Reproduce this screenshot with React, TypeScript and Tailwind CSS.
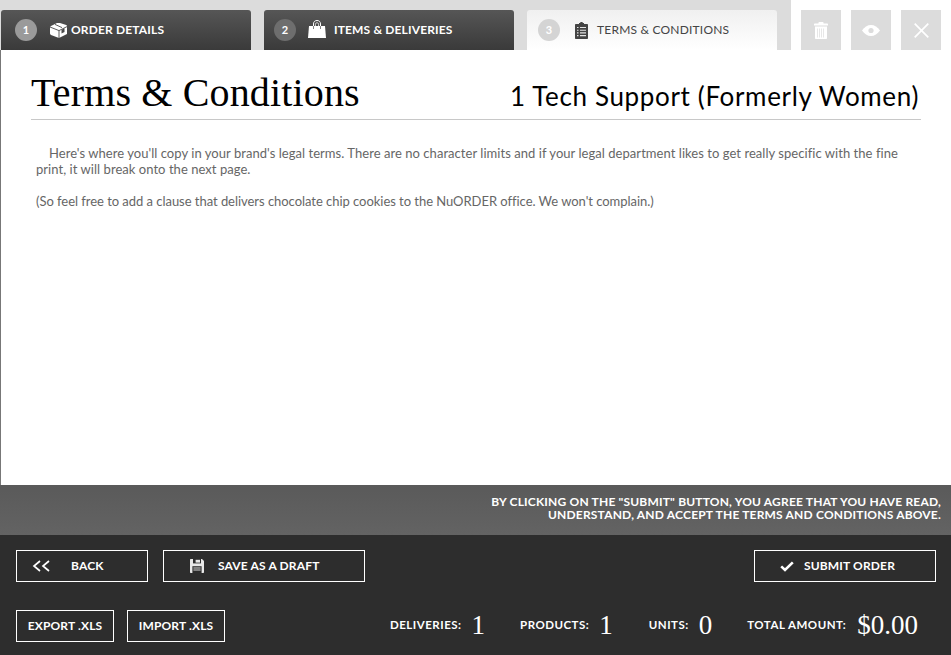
import type { ReactNode } from "react";

function BoxIcon() {
  return (
    <svg width="17" height="15" viewBox="0 0 17 15">
      <path d="M1 3 7 0H10L16.2 2C16.8 2.2 17 2.6 17 3V11L9 15 1 12C.3 11.7 0 11.3 0 10.6V4Z" fill="#fff" />
      <path d="M0 4 9 7.6V15M9 7.6 17 3.6M5 1.4 12 4.6" fill="none" stroke="#4a4a4a" strokeWidth=".9" />
      <path d="M11.5 6.8 14.5 5.3V9L11.5 10.5Z" fill="#4a4a4a" />
    </svg>
  );
}

function BagIcon() {
  return (
    <svg width="18" height="18" viewBox="0 0 18 18" fill="none">
      <path d="M1 6H17L18 18H0Z" fill="#fff" />
      <path d="M5.5 6V4C5.5 1.6 7 .5 9 .5S12.5 1.6 12.5 4V6" stroke="#fff" strokeWidth="1" />
      <path d="M7.4 6V4.4C7.4 3.4 8 2.8 9 2.8S10.6 3.4 10.6 4.4V6" stroke="#fff" strokeWidth=".8" />
      <path d="M5.5 6V9M12.5 6V9" stroke="#666" strokeWidth=".8" />
    </svg>
  );
}

function ClipboardIcon() {
  return (
    <svg width="13" height="17" viewBox="0 0 13 17">
      <path d="M1 2H4V1H5.2A1.3 1.3 0 0 1 7.8 1H9V2H12C12.6 2 13 2.4 13 3V16C13 16.6 12.6 17 12 17H1C.4 17 0 16.6 0 16V3C0 2.4.4 2 1 2Z" fill="#444" />
      <path d="M2 5.5H3.5M5 5.5H11M2 8.2H3.5M5 8.2H11M2 10.9H3.5M5 10.9H11M2 13.6H3.5M5 13.6H11" stroke="#e4e4e4" strokeWidth="1.1" />
    </svg>
  );
}

function TrashIcon() {
  return (
    <svg width="14" height="17" viewBox="0 0 14 17" fill="#fff">
      <path d="M4.5 1.6V.6C4.5.3 4.8 0 5.1 0H8.9C9.2 0 9.5.3 9.5.6V1.6H13C13.6 1.6 14 2 14 2.6V3.6H0V2.6C0 2 .4 1.6 1 1.6Z" />
      <path d="M1 4.6H13V16C13 16.6 12.6 17 12 17H2C1.4 17 1 16.6 1 16Z" />
      <path d="M3.5 6.5V15.5M5.5 6.5V15.5M7.5 6.5V15.5M9.5 6.5V15.5" stroke="#dcdcdc" strokeWidth=".7" />
    </svg>
  );
}

function EyeIcon() {
  return (
    <svg width="18" height="11" viewBox="0 0 18 11">
      <path d="M0 5.5C2.4 2 5.5 0 9 0S15.6 2 18 5.5C15.6 9 12.5 11 9 11S2.4 9 0 5.5Z" fill="#fff" />
      <circle cx="9" cy="5.5" r="2.6" fill="#dcdcdc" />
    </svg>
  );
}

function CloseIcon() {
  return (
    <svg width="15" height="15" viewBox="0 0 15 15" fill="none">
      <path d="M.7.7 14.3 14.3M14.3.7.7 14.3" stroke="#fff" strokeWidth="1.7" />
    </svg>
  );
}

function BackIcon() {
  return (
    <svg width="18" height="12" viewBox="0 0 18 12" fill="none">
      <path d="M8 1 2 6 8 11M17 1 11 6 17 11" stroke="#fff" strokeWidth="1.7" />
    </svg>
  );
}

function SaveIcon() {
  return (
    <svg width="14" height="14" viewBox="0 0 14 14">
      <path d="M0 1C0 .4.4 0 1 0H12L14 2V13C14 13.6 13.6 14 13 14H1C.4 14 0 13.6 0 13Z" fill="#e8e8e8" />
      <path d="M3 0H11V4.4H3Z" fill="#2d2d2d" />
      <path d="M5.6 .8H10V3.6H5.6Z" fill="#e8e8e8" />
      <path d="M2.4 7.2H11.6V14H2.4Z" fill="#2d2d2d" />
      <path d="M3.4 9H10.6M3.4 11H10.6" stroke="#e8e8e8" strokeWidth=".9" />
    </svg>
  );
}

function CheckIcon() {
  return (
    <svg width="14" height="11" viewBox="0 0 14 11" fill="none">
      <path d="M1.2 5.4 5 9 12.8 1.4" stroke="#fff" strokeWidth="2.6" />
    </svg>
  );
}

function DarkTab({ n, label, icon, className, iconBox, circle }: { n: number; label: string; icon: ReactNode; className: string; iconBox: string; circle: string }) {
  return (
    <div className={`flex h-10 w-[250px] items-center rounded-t-[3px] bg-gradient-to-b from-[#565656] to-[#3a3a3a] ${className}`}>
      <span className={`flex h-[22px] w-[22px] items-center justify-center rounded-full text-[11px] font-bold text-white ${circle}`}>{n}</span>
      <span className={`flex items-center ${iconBox}`}>{icon}</span>
      <span className="text-[12px] font-bold tracking-[0.15px] text-white">{label}</span>
    </div>
  );
}

function ToolButton({ children }: { children: ReactNode }) {
  return <div className="flex h-10 w-10 items-center justify-center bg-[#dcdcdc]">{children}</div>;
}

function OutlineButton({ className, children }: { className: string; children: ReactNode }) {
  return (
    <button className={`flex h-8 items-center border border-white text-[12px] font-bold tracking-[0.15px] text-white ${className}`}>
      {children}
    </button>
  );
}

function Stat({ label, value, className, valueClass }: { label: string; value: string; className: string; valueClass: string }) {
  return (
    <div className={`mb-[2px] flex items-center ${className}`}>
      <span className="text-[11.5px] font-bold tracking-[0.5px] text-white">{label}</span>
      <span className={`font-['Liberation_Serif',serif] text-[27px] leading-none text-white ${valueClass}`}>{value}</span>
    </div>
  );
}

export default function App() {
  return (
    <div className="flex h-[655px] w-[951px] flex-col overflow-hidden bg-white font-['Lato',sans-serif]">
      <div className="flex h-[50px] shrink-0">
        <div className="flex w-[791px] items-end gap-[13px] bg-[#dcdcdc] pl-px">
          <DarkTab n={1} label="ORDER DETAILS" className="pl-[14px]" circle="bg-[#9a9a9a]" iconBox="ml-[13px] mr-[4px]" icon={<BoxIcon />} />
          <DarkTab n={2} label="ITEMS & DELIVERIES" className="pl-[10px]" circle="bg-[#6e6e6e]" iconBox="mb-[2px] ml-[12px] mr-[8px]" icon={<BagIcon />} />
          <div className="flex h-10 w-[250px] items-center rounded-t-[3px] bg-gradient-to-b from-[#f0f0f0] to-white pl-[11px]">
            <span className="flex h-[22px] w-[22px] items-center justify-center rounded-full bg-[#d4d4d4] text-[11px] font-bold text-white">3</span>
            <span className="ml-[15px] mr-[9px] flex items-center"><ClipboardIcon /></span>
            <span className="text-[12px] tracking-[0.2px] text-[#444]">TERMS &amp; CONDITIONS</span>
          </div>
        </div>
        <div className="flex flex-1 items-end gap-[10px] pl-[10px]">
          <ToolButton><TrashIcon /></ToolButton>
          <ToolButton><EyeIcon /></ToolButton>
          <ToolButton><CloseIcon /></ToolButton>
        </div>
      </div>

      <div className="flex-1 border-l border-[#777] pl-[30px] pr-[30px]">
        <div className="flex h-[70px] items-end justify-between border-b border-[#c8c8c8] pb-[4px]">
          <h1 className="font-['Liberation_Serif',serif] text-[40px] leading-[44px] tracking-[0.15px] text-black">Terms &amp; Conditions</h1>
          <div className="pb-[1px] pr-[2px] text-[26px] leading-[36px] tracking-[0.65px] text-black">1 Tech Support (Formerly Women)</div>
        </div>
        <div className="pl-[5px] pt-[25px] text-[13px] leading-[16px] text-[#666]">
          <p className="indent-[13px] tracking-[0.045px]">Here's where you'll copy in your brand's legal terms. There are no character limits and if your legal department likes to get really specific with the fine print, it will break onto the next page.</p>
          <p className="mt-[16px] tracking-[-0.04px]">(So feel free to add a clause that delivers chocolate chip cookies to the NuORDER office. We won't complain.)</p>
        </div>
      </div>

      <div className="flex h-[50px] shrink-0 items-center justify-end bg-gradient-to-b from-[#5a5a5a] to-[#636363] pb-[5px] pr-[10px] text-right text-[12px] font-bold leading-[13px] tracking-[0.185px] text-white">
        <div>BY CLICKING ON THE "SUBMIT" BUTTON, YOU AGREE THAT YOU HAVE READ,<br />UNDERSTAND, AND ACCEPT THE TERMS AND CONDITIONS ABOVE.</div>
      </div>

      <div className="h-[120px] shrink-0 bg-[#2d2d2d] px-[15px] pt-[15px]">
        <div className="flex items-center pl-px">
          <OutlineButton className="w-[132px] pl-[15px]">
            <BackIcon />
            <span className="ml-[21px]">BACK</span>
          </OutlineButton>
          <OutlineButton className="ml-[15px] w-[202px] pl-[26px]">
            <SaveIcon />
            <span className="ml-[14px]">SAVE AS A DRAFT</span>
          </OutlineButton>
          <OutlineButton className="ml-auto w-[182px] pl-[25px]">
            <CheckIcon />
            <span className="ml-[10px]">SUBMIT ORDER</span>
          </OutlineButton>
        </div>
        <div className="mt-[28px] flex items-center pl-px">
          <OutlineButton className="w-[98px] justify-center">EXPORT .XLS</OutlineButton>
          <OutlineButton className="ml-[13px] w-[98px] justify-center">IMPORT .XLS</OutlineButton>
          <Stat className="ml-[165px]" label="DELIVERIES:" value="1" valueClass="ml-[10px]" />
          <Stat className="ml-[35px]" label="PRODUCTS:" value="1" valueClass="ml-[10px]" />
          <Stat className="ml-[36px]" label="UNITS:" value="0" valueClass="ml-[10px]" />
          <Stat className="ml-[35px]" label="TOTAL AMOUNT:" value="$0.00" valueClass="ml-[11px]" />
        </div>
      </div>
    </div>
  );
}
